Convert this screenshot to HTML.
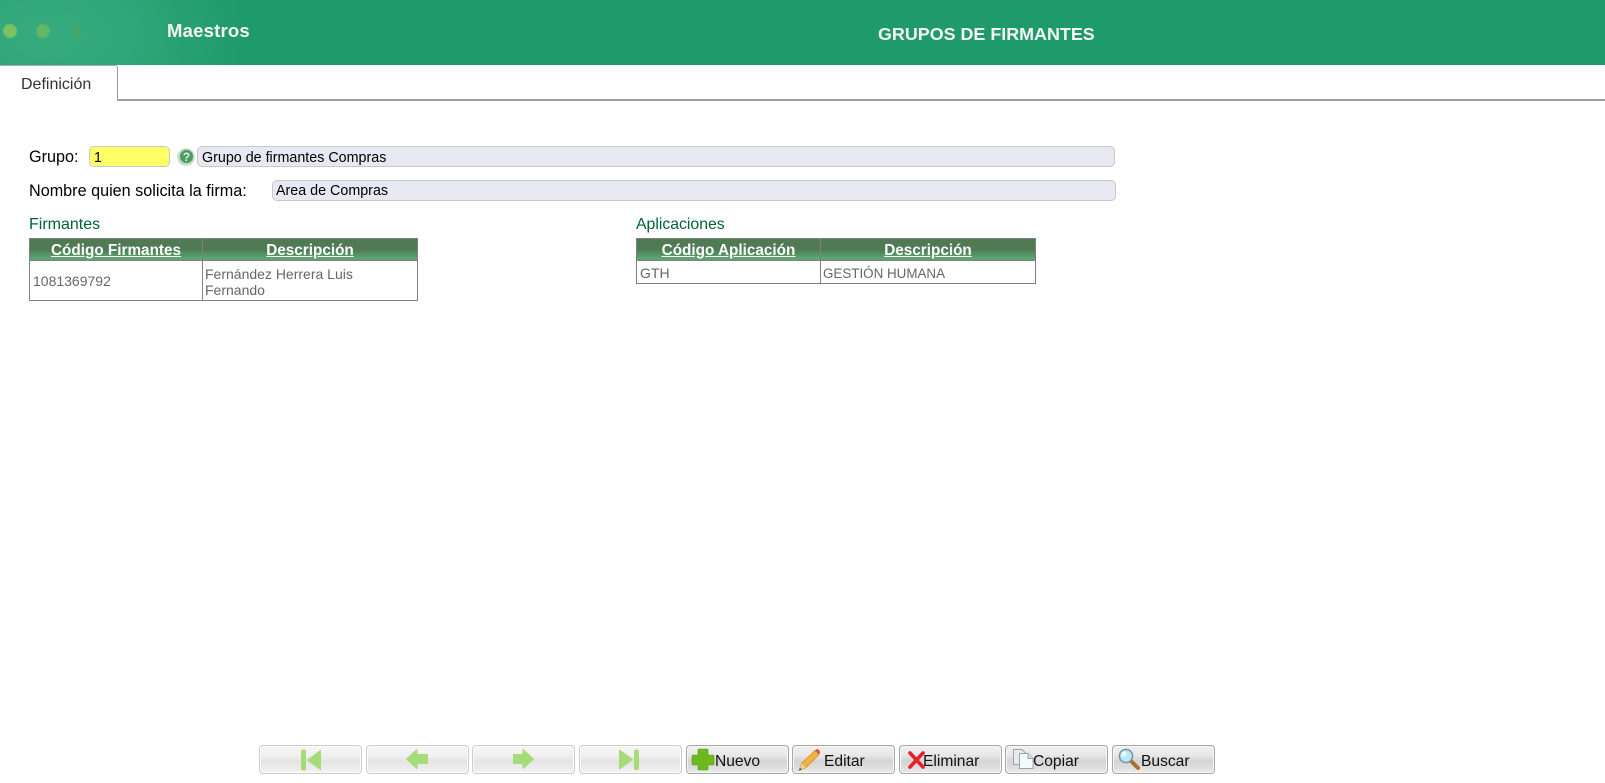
<!DOCTYPE html>
<html lang="es">
<head>
<meta charset="utf-8">
<title>Grupos de Firmantes</title>
<style>
html,body{margin:0;padding:0;background:#fff;width:1605px;height:783px;overflow:hidden}
body{position:relative;font-family:"Liberation Sans",sans-serif;color:#000}
.a{position:absolute;white-space:nowrap}
.hdr{left:0;top:0;width:1605px;height:65px;background:radial-gradient(ellipse 200px 130px at 50px 35px,#35ab7e 0%,#30a77a 40%,#27a071 70%,#1f9a6a 100%)}
.dot{position:absolute;top:24px;width:14px;height:14px;border-radius:50%;filter:blur(.6px)}
.inp{box-sizing:border-box;border:1px solid #c8c8c8;border-radius:5px;background:#e8e8f2;font-size:14.3px;line-height:22px;padding-left:4px;height:21px}
.lbl{font-size:16.2px;line-height:20px}
.sec{font-size:15.8px;color:#00633a;line-height:20px}
.t{position:absolute;box-sizing:border-box;border:1px solid #808080;background:#fff}
.th{position:absolute;top:0;height:21px;background:linear-gradient(#4f7a54 0%,#4f7a54 50%,#5aa46f 90%,#5aa46f 100%);color:#fff;font-weight:bold;font-size:15.3px;text-align:center;line-height:24px;text-decoration:underline}
.v{position:absolute;top:0;bottom:0;width:1px;background:#808080}
.h{position:absolute;left:0;right:0;top:21px;height:1px;background:#808080}
.c{position:absolute;font-size:14px;color:#666;line-height:16px;white-space:nowrap}
.b{position:absolute;top:745px;height:29px;box-sizing:border-box;width:103px;border:1px solid #a8a8a8;border-radius:4px;background:linear-gradient(#efefef 0%,#e8e8e8 35%,#d4d4d4 55%,#dedede 80%,#ececec 100%);font-size:15.6px;line-height:28px;white-space:nowrap;color:#111;box-shadow:inset 0 0 0 1px #f6f6f6}
.b.d{border-color:#cdcdcd;background:linear-gradient(#f6f6f6 0%,#f1f1f1 35%,#e4e4e4 55%,#ebebeb 80%,#f4f4f4 100%);box-shadow:inset 0 0 0 1px #fbfbfb}
.b svg{position:absolute;left:0;top:1px;overflow:visible}
.b span{position:absolute;top:2px}
.g{fill:#a6dc78;stroke:#a6dc78;stroke-width:1;stroke-linejoin:round}
</style>
</head>
<body>

<div class="a hdr">
  <div class="dot" style="left:3px;background:#7cc25f"></div>
  <div class="dot" style="left:36px;background:#62b765"></div>
  <div class="dot" style="left:69px;background:#3fa86f"></div>
</div>
<div class="a" style="left:167px;top:20px;color:#f4f4f4;font-weight:bold;font-size:18.5px;letter-spacing:.2px;line-height:22px">Maestros</div>
<div class="a" style="left:878px;top:23px;color:#f6f6f6;font-weight:bold;font-size:17.9px;line-height:22px">GRUPOS DE FIRMANTES</div>

<div class="a" style="left:0;top:65px;width:118px;height:35px;box-sizing:border-box;border-right:1px solid #999;border-top:1px solid #aaa;border-top-right-radius:3px;background:#fff"></div>
<div class="a" style="left:117px;top:99px;width:1488px;height:2px;background:#a0a0a0"></div>
<div class="a" style="left:21px;top:75px;font-size:16px;line-height:20px;color:#333">Definición</div>

<div class="a lbl" style="left:29px;top:147px">Grupo:</div>
<div class="a inp" style="left:89px;top:146px;width:81px;background:#ffff66;line-height:23px">1</div>
<svg class="a" style="left:177px;top:148px" width="18" height="18" viewBox="0 0 18 18">
  <circle cx="9" cy="9" r="8.8" fill="#c4dcc7"/>
  <circle cx="9.5" cy="8.5" r="6.6" fill="#4f9a62"/>
  <text x="9.5" y="13" text-anchor="middle" font-family="Liberation Sans" font-weight="bold" font-size="12" fill="#dcefdc">?</text>
</svg>
<div class="a inp" style="left:197px;top:146px;width:918px">Grupo de firmantes Compras</div>

<div class="a lbl" style="left:29px;top:181px">Nombre quien solicita la firma:</div>
<div class="a inp" style="left:272px;top:180px;width:844px;padding-left:3px;line-height:20px">Area de Compras</div>

<div class="a sec" style="left:29px;top:215px;font-size:16px">Firmantes</div>
<div class="t" style="left:29px;top:238px;width:389px;height:63px">
  <div class="th" style="left:0;width:172px">Código Firmantes</div>
  <div class="th" style="left:173px;width:214px">Descripción</div>
  <div class="h"></div>
  <div class="v" style="left:172px"></div>
  <div class="c" style="left:3px;top:34px">1081369792</div>
  <div class="c" style="left:175px;top:27px">Fernández Herrera Luis<br>Fernando</div>
</div>

<div class="a sec" style="left:636px;top:215px">Aplicaciones</div>
<div class="t" style="left:636px;top:238px;width:400px;height:46px">
  <div class="th" style="left:0;width:183px">Código Aplicación</div>
  <div class="th" style="left:184px;width:214px">Descripción</div>
  <div class="h"></div>
  <div class="v" style="left:183px"></div>
  <div class="c" style="left:3px;top:26px">GTH</div>
  <div class="c" style="left:186px;top:26.5px;font-size:13.4px">GESTIÓN HUMANA</div>
</div>

<div class="b d" style="left:259px">
  <svg width="103" height="28"><rect x="41.5" y="3" width="4" height="20" rx="1.5" class="g"/><path d="M47.5 13 L60.5 3.5 V22.5 Z" class="g"/></svg>
</div>
<div class="b d" style="left:366px">
  <svg width="103" height="28"><path d="M39.5 12 L50 2.5 V7.5 H60.5 V16.5 H50 V21.5 Z" class="g"/></svg>
</div>
<div class="b d" style="left:472px">
  <svg width="103" height="28"><path d="M60.5 12 L50 2.5 V7.5 H40.5 V16.5 H50 V21.5 Z" class="g"/></svg>
</div>
<div class="b d" style="left:579px">
  <svg width="103" height="28"><path d="M39.5 3 L52.5 12.5 L39.5 22 Z" class="g"/><rect x="54.5" y="3" width="4" height="19.5" rx="1.5" class="g"/></svg>
</div>

<div class="b" style="left:686px">
  <svg width="103" height="28"><path d="M11 3 Q11 2 12 2 H20 Q21 2 21 3 V8 H26 Q27 8 27 9 V17 Q27 18 26 18 H21 V22 Q21 23 20 23 H12 Q11 23 11 22 V18 H6 Q5 18 5 17 V9 Q5 8 6 8 H11 Z" fill="#6cb81e" stroke="#5aa312" stroke-width=".6"/></svg>
  <span style="left:28px">Nuevo</span>
</div>
<div class="b" style="left:792px">
  <svg width="103" height="28"><path d="M6 23.5 L8.5 16.5 L22 3.5 L26 7.5 L12.8 20.8 Z" fill="#f2b33d" stroke="#c98a22" stroke-width=".7"/><path d="M6 23.5 L8.5 16.5 L12.8 20.8 Z" fill="#e8cfa0"/><path d="M6 23.5 L7 20.6 L9 22.4 Z" fill="#555"/><path d="M22 3.5 L26 7.5 L27 6 Q27.5 3 24 2 Z" fill="#e0504a"/></svg>
  <span style="left:31px">Editar</span>
</div>
<div class="b" style="left:899px">
  <svg width="103" height="28"><path d="M10 6 L23 20 M23 6 L10 20" stroke="#e8202c" stroke-width="3.6" fill="none" stroke-linecap="round"/></svg>
  <span style="left:23px">Eliminar</span>
</div>
<div class="b" style="left:1005px">
  <svg width="103" height="28"><path d="M7.5 2.5 H16 L20 6.5 V17.5 H7.5 Z" fill="#e4ecec" stroke="#9aa6a6" stroke-width="1"/><path d="M13.5 6.5 H22 L27 11.5 V21.5 H13.5 Z" fill="#f4fafa" stroke="#9aa6a6" stroke-width="1"/><path d="M22 6.5 V11.5 H27" fill="#d8e2e2" stroke="#9aa6a6" stroke-width="1"/></svg>
  <span style="left:27px">Copiar</span>
</div>
<div class="b" style="left:1112px">
  <svg width="103" height="28"><path d="M18 14 L25 21" stroke="#a8702a" stroke-width="4" stroke-linecap="round"/><circle cx="13" cy="9" r="6.6" fill="#bfe4f4" stroke="#6f95ad" stroke-width="1.5"/><circle cx="11" cy="7" r="2.6" fill="#e8f7fd"/></svg>
  <span style="left:28px">Buscar</span>
</div>

</body>
</html>
